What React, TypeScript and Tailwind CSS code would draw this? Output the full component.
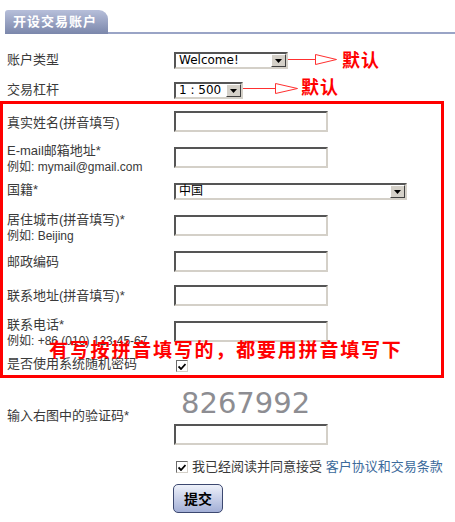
const inset =
    "border-2 border-t-[#555] border-l-[#555] border-b-[#d4d0c8] border-r-[#d4d0c8]";

function TextBox() {
    return <div className={`w-[154px] h-[21px] bg-white ${inset}`} />;
}

function Select({ className, value }: { className: string; value: string }) {
    return (
        <div className={`flex h-[17px] bg-white ${inset} ${className}`}>
            <span className="flex-1 pl-[3px] text-[12px] leading-[13px] text-black font-['DejaVu_Sans','Noto_Sans_CJK_SC',sans-serif]">
                {value}
            </span>
            <div className="w-[15px] h-[13px] bg-[#d4d0c8] border border-t-white border-l-white border-b-[#404040] border-r-[#404040] flex items-center justify-center">
                <svg width="7" height="4" viewBox="0 0 7 4">
                    <polygon points="0,0 7,0 3.5,4" fill="#000" />
                </svg>
            </div>
        </div>
    );
}

function CheckBox() {
    return (
        <div className={`w-[12px] h-[12px] bg-white flex items-center justify-center border border-t-[#6a6a6a] border-l-[#6a6a6a] border-b-[#d4d0c8] border-r-[#d4d0c8]`}>
            <svg width="8" height="7" viewBox="0 0 8 7">
                <path d="M0.5 3.5 L3 6 L7.5 1" stroke="#000" strokeWidth="1.8" fill="none" />
            </svg>
        </div>
    );
}

const Hint = ({ children }: { children: React.ReactNode }) => (
    <div className="text-[12px] leading-[16px]">{children}</div>
);

export default function App() {
    return (
        <div className="relative w-[455px] h-[522px] overflow-hidden bg-white text-[13px] leading-[16px] text-[#3a3a3a] font-['Liberation_Sans','Noto_Sans_CJK_SC',sans-serif]">
            {/* tab header */}
            <div className="flex items-end pt-[10px]">
                <div className="w-[5px]" />
                <div className="w-[103px] h-[24px] rounded-tr-[9px] rounded-tl-[3px] bg-gradient-to-b from-[#b7bfda] to-[#7b87ab] pl-[8px] flex items-center text-white font-bold text-[13px] tracking-[1px]">
                    开设交易账户
                </div>
                <div className="flex-1 border-b-2 border-[#9aa4c6]" />
            </div>

            {/* default rows */}
            <div className="flex h-[30px] pl-[7px] mt-[18px]">
                <div className="w-[167px]">账户类型</div>
                <Select className="w-[114px]" value="Welcome!" />
            </div>
            <div className="flex h-[19px] pl-[7px]">
                <div className="w-[167px]">交易杠杆</div>
                <Select className="w-[69px]" value="1 : 500" />
            </div>

            {/* required block */}
            <div className="w-[444px] border-[3px] border-[#ff0000] pt-[7px] pl-[4px]">
                <div className="flex h-[36px]">
                    <div className="w-[167px] mt-[4px]">真实姓名(拼音填写)</div>
                    <TextBox />
                </div>
                <div className="flex h-[36px]">
                    <div className="w-[167px] -mt-[4px]">
                        <div>E-mail邮箱地址*</div>
                        <Hint>例如: mymail@gmail.com</Hint>
                    </div>
                    <TextBox />
                </div>
                <div className="flex h-[32px]">
                    <div className="w-[167px] -mt-[1px]">国籍*</div>
                    <Select className="w-[233px]" value="中国" />
                </div>
                <div className="flex h-[36px]">
                    <div className="w-[167px] -mt-[3px]">
                        <div>居住城市(拼音填写)*</div>
                        <Hint>例如: Beijing</Hint>
                    </div>
                    <TextBox />
                </div>
                <div className="flex h-[34px]">
                    <div className="w-[167px] mt-[3px]">邮政编码</div>
                    <TextBox />
                </div>
                <div className="flex h-[36px]">
                    <div className="w-[167px] mt-[3px]">联系地址(拼音填写)*</div>
                    <TextBox />
                </div>
                <div className="flex h-[39px]">
                    <div className="w-[167px] -mt-[4px]">
                        <div>联系电话*</div>
                        <Hint>例如: +86 (010) 123-45-67</Hint>
                    </div>
                    <TextBox />
                </div>
                <div className="flex h-[15px]">
                    <div className="w-[169px] -mt-[4px]">是否使用系统随机密码</div>
                    <CheckBox />
                </div>
            </div>

            {/* captcha */}
            <div className="flex">
                <div className="w-[174px] pl-[7px] pt-[30px]">输入右图中的验证码*</div>
                <div className="mt-[11px]">
                    <div className="pl-[7px] text-[29px] leading-[29px] text-[#8d8d92] font-['DejaVu_Sans',sans-serif]">
                        8267992
                    </div>
                    <div className="mt-[6px]">
                        <TextBox />
                    </div>
                </div>
            </div>

            <div className="flex items-center h-[16px] mt-[14px] pl-[176px]">
                <CheckBox />
                <span className="ml-[4px]">
                    我已经阅读并同意接受 <span className="text-[#3b6a9b]">客户协议和交易条款</span>
                </span>
            </div>

            <div className="ml-[173px] mt-[9px] w-[50px] h-[29px] rounded-[5px] border border-[#3c4870] bg-gradient-to-b from-[#eef1fa] to-[#a3afd6] flex items-center justify-center text-black font-bold text-[14px]">
                提交
            </div>

            {/* annotations */}
            <svg className="absolute left-[288px] top-[53px]" width="50" height="13" viewBox="0 0 50 13">
                <line x1="0" y1="6.5" x2="27" y2="6.5" stroke="#ff3030" strokeWidth="1" />
                <polygon points="27.5,1.5 48.5,6.5 27.5,11.5" fill="white" stroke="#ff3030" strokeWidth="1" />
            </svg>
            <div className="absolute left-[342px] top-[52px] text-[18px] leading-none font-bold tracking-[1px] text-[#ff0000]">
                默认
            </div>
            <svg className="absolute left-[243px] top-[82px]" width="56" height="13" viewBox="0 0 56 13">
                <line x1="0" y1="6.5" x2="32" y2="6.5" stroke="#ff3030" strokeWidth="1" />
                <polygon points="32.5,1.5 54.5,6.5 32.5,11.5" fill="white" stroke="#ff3030" strokeWidth="1" />
            </svg>
            <div className="absolute left-[301px] top-[79px] text-[18px] leading-none font-bold tracking-[1px] text-[#ff0000]">
                默认
            </div>
            <div className="absolute left-[49px] top-[341px] text-[19px] leading-none font-bold tracking-[1.8px] text-[#ff0000] whitespace-nowrap">
                有写按拼音填写的，都要用拼音填写下
            </div>
        </div>
    );
}
